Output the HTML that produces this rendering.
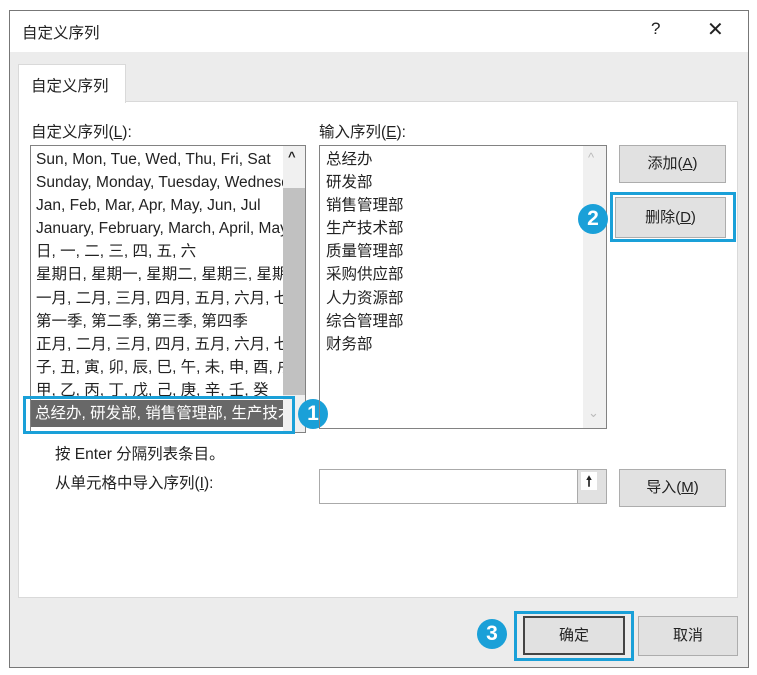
<!DOCTYPE html>
<html><head><meta charset="utf-8"><style>
*{margin:0;padding:0;box-sizing:border-box}
body{width:757px;height:675px;background:#fff;position:relative;overflow:hidden;font-family:"Liberation Sans","Noto Sans CJK SC",sans-serif;color:#222;font-size:15px}
.a{position:absolute}
.btn{position:absolute;background:#e1e1e1;border:1px solid #adadad;text-align:center;font-size:15px}
.circ{position:absolute;width:30px;height:30px;border-radius:50%;background:#1aa0d8;color:#fff;font-weight:bold;font-size:21px;text-align:center;line-height:30px;font-family:"Liberation Sans",sans-serif}
.list div{height:23.1px;line-height:23px;white-space:nowrap;font-size:15.5px}
</style></head><body>
<div class="a" style="left:9px;top:10px;width:740px;height:658px;border:1px solid #777;background:#ececec"></div>
<div class="a" style="left:10px;top:11px;width:738px;height:41px;background:#fff"></div>
<div class="a" style="left:22px;top:21px;font-size:15.5px">自定义序列</div>
<div class="a" style="left:651px;top:19px;font-size:17px">?</div>
<div class="a" style="left:707px;top:17px;font-size:20px;font-weight:300">✕</div>
<div class="a" style="left:18px;top:101px;width:720px;height:497px;background:#fff;border:1px solid #d9d9d9"></div>
<div class="a" style="left:18px;top:64px;width:108px;height:39px;background:#fff;border:1px solid #d9d9d9;border-bottom:none;padding:9px 0 0 12px;font-size:15.5px">自定义序列</div>
<div class="a" style="left:31px;top:120px;font-size:15.5px">自定义序列(<u>L</u>):</div>
<div class="a" style="left:319px;top:120px;font-size:15.5px">输入序列(<u>E</u>):</div>
<div class="a list" style="left:30px;top:145px;width:276px;height:288px;border:1px solid #828282;overflow:hidden;padding:2px 0 0 5px">
<div>Sun, Mon, Tue, Wed, Thu, Fri, Sat</div>
<div>Sunday, Monday, Tuesday, Wednesday</div>
<div>Jan, Feb, Mar, Apr, May, Jun, Jul</div>
<div>January, February, March, April, May</div>
<div>日, 一, 二, 三, 四, 五, 六</div>
<div>星期日, 星期一, 星期二, 星期三, 星期四</div>
<div>一月, 二月, 三月, 四月, 五月, 六月, 七月</div>
<div>第一季, 第二季, 第三季, 第四季</div>
<div>正月, 二月, 三月, 四月, 五月, 六月, 七月</div>
<div>子, 丑, 寅, 卯, 辰, 巳, 午, 未, 申, 酉, 戌</div>
<div>甲, 乙, 丙, 丁, 戊, 己, 庚, 辛, 壬, 癸</div>
</div>
<div class="a" style="left:283px;top:146px;width:22px;height:286px;background:#f0f0f0"></div>
<div class="a" style="left:283px;top:188px;width:22px;height:207px;background:#c1c1c1"></div>
<div class="a" style="left:288px;top:149px;font-size:13px;font-weight:bold">^</div>
<div class="a" style="left:31px;top:400px;width:252px;height:27px;background:#686868;color:#fff;font-size:15.5px;line-height:27px;padding-left:4px;white-space:nowrap;overflow:hidden">总经办, 研发部, 销售管理部, 生产技术部</div>
<div class="a" style="left:23px;top:396px;width:272px;height:38px;border:3px solid #1aa0d8"></div>
<div class="circ" style="left:298px;top:399px">1</div>
<div class="a list" style="left:319px;top:145px;width:288px;height:284px;border:1px solid #828282;padding:2px 0 0 6px">
<div>总经办</div><div>研发部</div><div>销售管理部</div><div>生产技术部</div><div>质量管理部</div><div>采购供应部</div><div>人力资源部</div><div>综合管理部</div><div>财务部</div>
</div>
<div class="a" style="left:583px;top:146px;width:23px;height:282px;background:#f0f0f0"></div>
<div class="a" style="left:588px;top:150px;color:#bbb;font-size:13px">^</div>
<div class="a" style="left:588px;top:405px;color:#bbb;font-size:13px">⌄</div>
<div class="btn" style="left:619px;top:145px;width:107px;height:38px;line-height:36px">添加(<u>A</u>)</div>
<div class="btn" style="left:615px;top:197px;width:111px;height:41px;line-height:39px">删除(<u>D</u>)</div>
<div class="a" style="left:610px;top:192px;width:126px;height:50px;border:3px solid #1aa0d8"></div>
<div class="circ" style="left:578px;top:204px">2</div>
<div class="a" style="left:55px;top:442px;font-size:15.5px">按 Enter 分隔列表条目。</div>
<div class="a" style="left:55px;top:471px;font-size:15.5px">从单元格中导入序列(<u>I</u>):</div>
<div class="a" style="left:319px;top:469px;width:288px;height:35px;border:1px solid #aaa;background:#fff"></div>
<div class="a" style="left:577px;top:470px;width:29px;height:33px;background:#e1e1e1;border-left:1px solid #aaa"></div>
<div class="a" style="left:581px;top:472px;width:16px;height:18px;background:#fff;text-align:center;font-size:14px;font-weight:bold;line-height:18px">🠕</div>
<div class="btn" style="left:619px;top:469px;width:107px;height:38px;line-height:36px">导入(<u>M</u>)</div>
<div class="btn" style="left:523px;top:616px;width:102px;height:39px;line-height:35px;border:2px solid #444">确定</div>
<div class="a" style="left:514px;top:611px;width:120px;height:50px;border:3px solid #1aa0d8"></div>
<div class="circ" style="left:477px;top:619px">3</div>
<div class="btn" style="left:638px;top:616px;width:100px;height:40px;line-height:38px">取消</div>
</body></html>
